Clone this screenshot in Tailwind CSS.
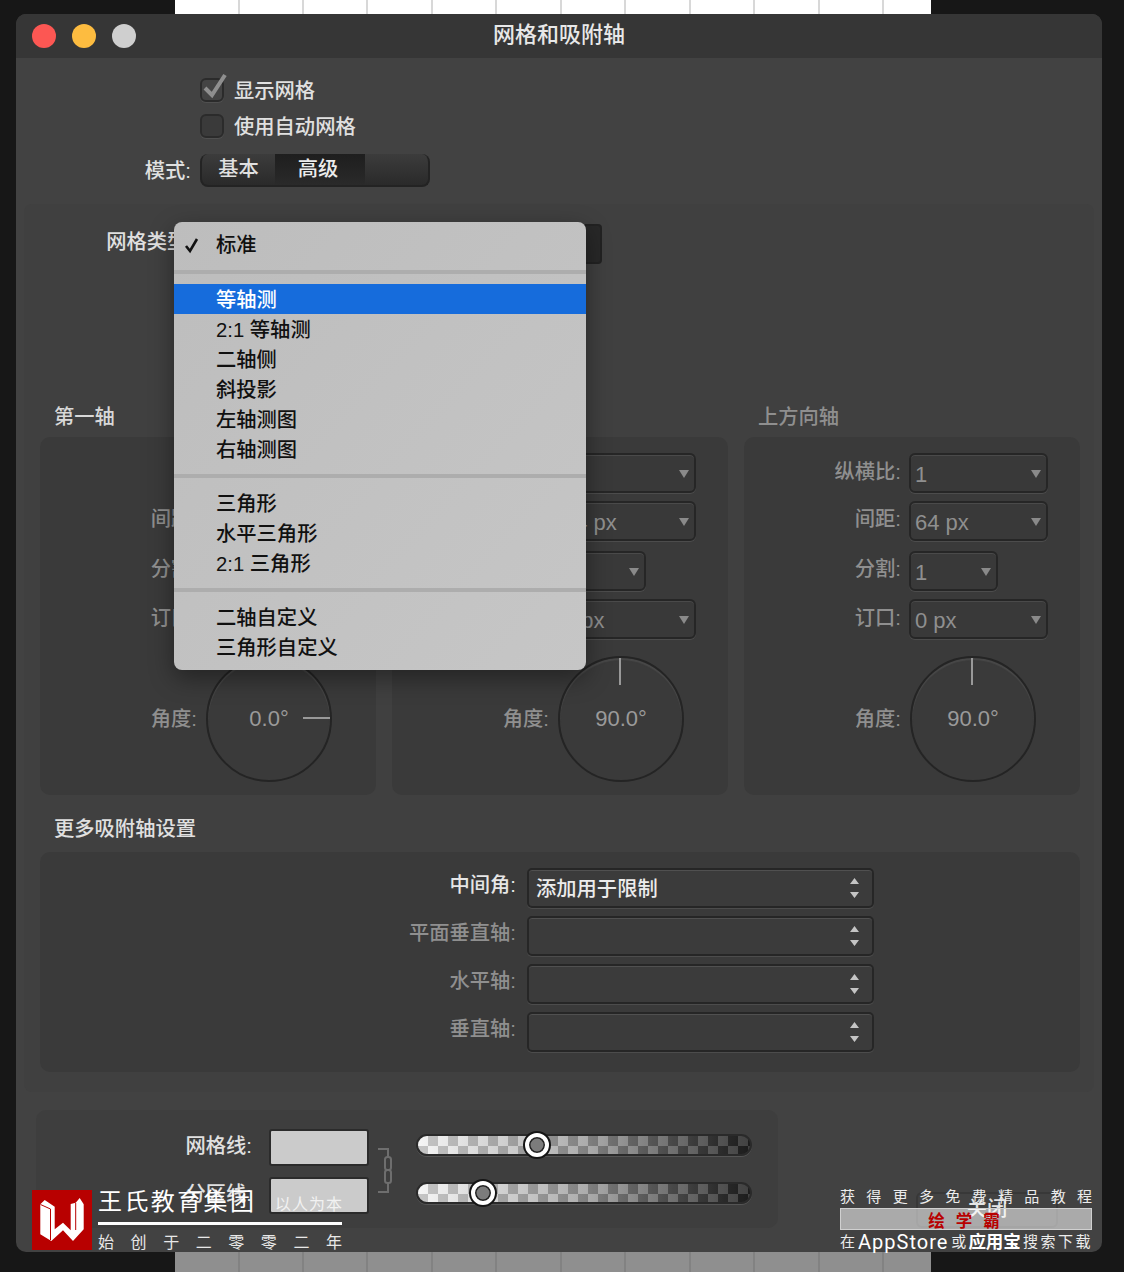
<!DOCTYPE html>
<html lang="zh-CN">
<head>
    <meta charset="UTF-8">
    <title>网格和吸附轴</title>
    <script src="https://cdn.jsdelivr.net/npm/@tailwindcss/browser@4"></script>
</head>
<body class="bg-[#171717]">
<div class="relative w-[1124px] h-[1272px] overflow-hidden font-['Liberation_Sans','Noto_Sans_CJK_SC',sans-serif] font-medium text-[20.3px] leading-[28px] text-[#e6e6e6]">
    <!-- document behind the dialog -->
    <div class="absolute left-[175px] top-0 w-[756px] h-[14px] bg-white bg-[repeating-linear-gradient(90deg,#ffffff_0,#ffffff_62.5px,#d8d8d8_62.5px,#d8d8d8_64.5px)]"></div>
    <div class="absolute left-[175px] top-[1252px] w-[756px] h-[20px] bg-[#8f8f8f] bg-[repeating-linear-gradient(90deg,#8f8f8f_0,#8f8f8f_62.5px,#828282_62.5px,#828282_64.5px)]"></div>

    <!-- dialog window -->
    <div class="absolute left-[16px] top-[14px] w-[1086px] h-[1238px] bg-[#424242] rounded-[10px] overflow-hidden">
        <div class="relative h-[44px] bg-[#363636] flex items-center justify-center text-[22px] text-[#e8e8e8] pb-[3px]">
            <div class="absolute left-[16px] top-[10px] flex gap-[16px]">
                <span class="w-[24px] h-[24px] rounded-full bg-[#fc5753]"></span>
                <span class="w-[24px] h-[24px] rounded-full bg-[#fdbc40]"></span>
                <span class="w-[24px] h-[24px] rounded-full bg-[#cfcfcf]"></span>
            </div>
            网格和吸附轴
        </div>

        <!-- show grid -->
        <div class="mt-[20px] ml-[184px] flex items-center h-[24px]">
            <span class="relative w-[24px] h-[24px] rounded-[6px] bg-[#444444] border-2 border-[#2b2b2b] shadow-[0_1px_0_#505050]">
                <svg class="absolute left-[1px] top-[-8px]" width="26" height="28" viewBox="0 0 26 28"><path d="M2 16 L9 23 L22 3" fill="none" stroke="#8f8f8f" stroke-width="4"/></svg>
            </span>
            <span class="ml-[10px] pt-[2px] text-[#e0e0e0]">显示网格</span>
        </div>
        <div class="mt-[12px] ml-[184px] flex items-center h-[24px]">
            <span class="w-[24px] h-[24px] rounded-[6px] bg-[#3a3a3a] border-2 border-[#2b2b2b] shadow-[0_1px_0_#505050]"></span>
            <span class="ml-[10px] pt-[2px] text-[#e0e0e0]">使用自动网格</span>
        </div>
        <div class="mt-[16px] flex items-center h-[33px]">
            <span class="w-[175px] text-right text-[#e0e0e0]">模式:</span>
            <div class="ml-[9px] w-[230px] h-[33px] flex rounded-[8px] border-2 border-[#232323] border-t-0 bg-gradient-to-b from-[#3c3c3c] to-[#2a2a2a] overflow-hidden">
                <span class="w-[73px] text-center text-[#e0e0e0] leading-[30px]">基本</span>
                <span class="w-[90px] pr-[4px] text-center text-[#ececec] leading-[30px] bg-gradient-to-b from-[#1e1e1e] to-[#2a2a2a]">高级</span>
            </div>
        </div>

        <!-- grid settings panel -->
        <div class="mt-[17px] mx-[8px] h-[888px] bg-[#404040] rounded-[8px] pt-[20px] pl-[16px]">
            <div class="flex items-center h-[40px]">
                <span class="w-[169px] text-right text-[#e0e0e0] -ml-[16px] pb-[4px]">网格类型:</span>
                <span class="ml-[8px] w-[401px] h-[40px] rounded-[4px] bg-[#282828] border-2 border-[#222]"></span>
            </div>

            <div class="mt-[141px] grid grid-cols-[336px_336px_336px] gap-x-[16px]">
                <div class="pl-[14px] h-[24px] leading-[24px] text-[#d8d8d8]">第一轴</div>
                <div class="pl-[14px] h-[24px] leading-[24px] text-[#8f8f8f]">第二轴</div>
                <div class="pl-[14px] h-[24px] leading-[24px] text-[#8f8f8f]">上方向轴</div>
            </div>

            <div class="mt-[8px] grid grid-cols-[336px_336px_336px] gap-x-[16px] text-[#8f8f8f]">
                <!-- first axis -->
                <div class="h-[358px] bg-[#3a3a3a] rounded-[10px] pt-[16px]">
                    <div class="flex items-center h-[40px]">
                        <span class="w-[157px]"></span>
                        <div class="relative ml-[8px] w-[139px] h-[40px] rounded-[6px] border-2 border-[#262626] bg-[#393939] shadow-[inset_0_1px_0_#4a4a4a,0_1px_0_#4c4c4c] pl-[4px] text-[22px] leading-[40px]">1<svg class="absolute right-[5px] top-[15px]" width="10" height="8" viewBox="0 0 10 8"><path d="M0 0H10L5 8Z" fill="#8a8a8a"/></svg></div>
                    </div>
                    <div class="flex items-center h-[40px] mt-[8px]">
                        <span class="w-[157px] text-right pb-[4px]">间距:</span>
                        <div class="relative ml-[8px] w-[139px] h-[40px] rounded-[6px] border-2 border-[#262626] bg-[#393939] shadow-[inset_0_1px_0_#4a4a4a,0_1px_0_#4c4c4c] pl-[4px] text-[22px] leading-[40px]">64 px<svg class="absolute right-[5px] top-[15px]" width="10" height="8" viewBox="0 0 10 8"><path d="M0 0H10L5 8Z" fill="#8a8a8a"/></svg></div>
                    </div>
                    <div class="flex items-center h-[40px] mt-[10px]">
                        <span class="w-[157px] text-right pb-[4px]">分割:</span>
                        <div class="relative ml-[8px] w-[89px] h-[40px] rounded-[6px] border-2 border-[#262626] bg-[#393939] shadow-[inset_0_1px_0_#4a4a4a,0_1px_0_#4c4c4c] pl-[4px] text-[22px] leading-[40px]">1<svg class="absolute right-[5px] top-[15px]" width="10" height="8" viewBox="0 0 10 8"><path d="M0 0H10L5 8Z" fill="#8a8a8a"/></svg></div>
                    </div>
                    <div class="flex items-center h-[40px] mt-[8px]">
                        <span class="w-[157px] text-right pb-[3px]">订口:</span>
                        <div class="relative ml-[8px] w-[139px] h-[40px] rounded-[6px] border-2 border-[#262626] bg-[#393939] shadow-[inset_0_1px_0_#4a4a4a,0_1px_0_#4c4c4c] pl-[4px] text-[22px] leading-[40px]">0 px<svg class="absolute right-[5px] top-[15px]" width="10" height="8" viewBox="0 0 10 8"><path d="M0 0H10L5 8Z" fill="#8a8a8a"/></svg></div>
                    </div>
                    <div class="flex items-center h-[126px] mt-[17px]">
                        <span class="w-[157px] text-right">角度:</span>
                        <div class="relative ml-[9px] w-[126px] h-[126px] rounded-full border-2 border-[#242424] shadow-[inset_0_2px_1px_#484848] flex items-center justify-center text-[22px] text-[#9a9a9a]">0.0°<span class="absolute right-0 top-[59px] w-[27px] h-[2px] bg-[#999]"></span></div>
                    </div>
                </div>
                <!-- second axis -->
                <div class="h-[358px] bg-[#3a3a3a] rounded-[10px] pt-[16px]">
                    <div class="flex items-center h-[40px]">
                        <span class="w-[157px] text-right pb-[2px]">纵横比:</span>
                        <div class="relative ml-[8px] w-[139px] h-[40px] rounded-[6px] border-2 border-[#262626] bg-[#393939] shadow-[inset_0_1px_0_#4a4a4a,0_1px_0_#4c4c4c] pl-[4px] text-[22px] leading-[40px]">1<svg class="absolute right-[5px] top-[15px]" width="10" height="8" viewBox="0 0 10 8"><path d="M0 0H10L5 8Z" fill="#8a8a8a"/></svg></div>
                    </div>
                    <div class="flex items-center h-[40px] mt-[8px]">
                        <span class="w-[157px] text-right pb-[4px]">间距:</span>
                        <div class="relative ml-[8px] w-[139px] h-[40px] rounded-[6px] border-2 border-[#262626] bg-[#393939] shadow-[inset_0_1px_0_#4a4a4a,0_1px_0_#4c4c4c] pl-[4px] text-[22px] leading-[40px]">64 px<svg class="absolute right-[5px] top-[15px]" width="10" height="8" viewBox="0 0 10 8"><path d="M0 0H10L5 8Z" fill="#8a8a8a"/></svg></div>
                    </div>
                    <div class="flex items-center h-[40px] mt-[10px]">
                        <span class="w-[157px] text-right pb-[4px]">分割:</span>
                        <div class="relative ml-[8px] w-[89px] h-[40px] rounded-[6px] border-2 border-[#262626] bg-[#393939] shadow-[inset_0_1px_0_#4a4a4a,0_1px_0_#4c4c4c] pl-[4px] text-[22px] leading-[40px]">1<svg class="absolute right-[5px] top-[15px]" width="10" height="8" viewBox="0 0 10 8"><path d="M0 0H10L5 8Z" fill="#8a8a8a"/></svg></div>
                    </div>
                    <div class="flex items-center h-[40px] mt-[8px]">
                        <span class="w-[157px] text-right pb-[3px]">订口:</span>
                        <div class="relative ml-[8px] w-[139px] h-[40px] rounded-[6px] border-2 border-[#262626] bg-[#393939] shadow-[inset_0_1px_0_#4a4a4a,0_1px_0_#4c4c4c] pl-[4px] text-[22px] leading-[40px]">0 px<svg class="absolute right-[5px] top-[15px]" width="10" height="8" viewBox="0 0 10 8"><path d="M0 0H10L5 8Z" fill="#8a8a8a"/></svg></div>
                    </div>
                    <div class="flex items-center h-[126px] mt-[17px]">
                        <span class="w-[157px] text-right">角度:</span>
                        <div class="relative ml-[9px] w-[126px] h-[126px] rounded-full border-2 border-[#242424] shadow-[inset_0_2px_1px_#484848] flex items-center justify-center text-[22px] text-[#9a9a9a]">90.0°<span class="absolute left-[59px] top-0 w-[2px] h-[27px] bg-[#999]"></span></div>
                    </div>
                </div>
                <!-- up axis -->
                <div class="h-[358px] bg-[#3a3a3a] rounded-[10px] pt-[16px]">
                    <div class="flex items-center h-[40px]">
                        <span class="w-[157px] text-right pb-[2px]">纵横比:</span>
                        <div class="relative ml-[8px] w-[139px] h-[40px] rounded-[6px] border-2 border-[#262626] bg-[#393939] shadow-[inset_0_1px_0_#4a4a4a,0_1px_0_#4c4c4c] pl-[4px] text-[22px] leading-[40px]">1<svg class="absolute right-[5px] top-[15px]" width="10" height="8" viewBox="0 0 10 8"><path d="M0 0H10L5 8Z" fill="#8a8a8a"/></svg></div>
                    </div>
                    <div class="flex items-center h-[40px] mt-[8px]">
                        <span class="w-[157px] text-right pb-[4px]">间距:</span>
                        <div class="relative ml-[8px] w-[139px] h-[40px] rounded-[6px] border-2 border-[#262626] bg-[#393939] shadow-[inset_0_1px_0_#4a4a4a,0_1px_0_#4c4c4c] pl-[4px] text-[22px] leading-[40px]">64 px<svg class="absolute right-[5px] top-[15px]" width="10" height="8" viewBox="0 0 10 8"><path d="M0 0H10L5 8Z" fill="#8a8a8a"/></svg></div>
                    </div>
                    <div class="flex items-center h-[40px] mt-[10px]">
                        <span class="w-[157px] text-right pb-[4px]">分割:</span>
                        <div class="relative ml-[8px] w-[89px] h-[40px] rounded-[6px] border-2 border-[#262626] bg-[#393939] shadow-[inset_0_1px_0_#4a4a4a,0_1px_0_#4c4c4c] pl-[4px] text-[22px] leading-[40px]">1<svg class="absolute right-[5px] top-[15px]" width="10" height="8" viewBox="0 0 10 8"><path d="M0 0H10L5 8Z" fill="#8a8a8a"/></svg></div>
                    </div>
                    <div class="flex items-center h-[40px] mt-[8px]">
                        <span class="w-[157px] text-right pb-[3px]">订口:</span>
                        <div class="relative ml-[8px] w-[139px] h-[40px] rounded-[6px] border-2 border-[#262626] bg-[#393939] shadow-[inset_0_1px_0_#4a4a4a,0_1px_0_#4c4c4c] pl-[4px] text-[22px] leading-[40px]">0 px<svg class="absolute right-[5px] top-[15px]" width="10" height="8" viewBox="0 0 10 8"><path d="M0 0H10L5 8Z" fill="#8a8a8a"/></svg></div>
                    </div>
                    <div class="flex items-center h-[126px] mt-[17px]">
                        <span class="w-[157px] text-right">角度:</span>
                        <div class="relative ml-[9px] w-[126px] h-[126px] rounded-full border-2 border-[#242424] shadow-[inset_0_2px_1px_#484848] flex items-center justify-center text-[22px] text-[#9a9a9a]">90.0°<span class="absolute left-[59px] top-0 w-[2px] h-[27px] bg-[#999]"></span></div>
                    </div>
                </div>
            </div>

            <!-- more snap settings -->
            <div class="mt-[22px] pl-[14px] h-[24px] leading-[24px] text-[#e0e0e0]">更多吸附轴设置</div>
            <div class="mt-[11px] w-[1040px] h-[220px] bg-[#3a3a3a] rounded-[10px] pt-[16px] flex flex-col gap-[8px] text-[#8f8f8f]">
                <div class="flex items-center h-[40px]">
                    <span class="w-[476px] text-right text-[#e6e6e6] pb-[6px]">中间角:</span>
                    <div class="relative ml-[11px] w-[347px] h-[40px] rounded-[5px] border-2 border-[#262626] bg-[#3b3b3b] shadow-[inset_0_1px_0_#505050,0_1px_0_#4c4c4c] pl-[7px] leading-[38px] text-[#ececec]">添加用于限制<svg class="absolute right-[13px] top-[8px]" width="9" height="20" viewBox="0 0 9 20"><path d="M4.5 0L9 6H0ZM0 14H9L4.5 20Z" fill="#c4c4c4"/></svg></div>
                </div>
                <div class="flex items-center h-[40px]">
                    <span class="w-[476px] text-right pb-[6px]">平面垂直轴:</span>
                    <div class="relative ml-[11px] w-[347px] h-[40px] rounded-[5px] border-2 border-[#262626] bg-[#3b3b3b] shadow-[inset_0_1px_0_#505050,0_1px_0_#4c4c4c]"><svg class="absolute right-[13px] top-[8px]" width="9" height="20" viewBox="0 0 9 20"><path d="M4.5 0L9 6H0ZM0 14H9L4.5 20Z" fill="#c4c4c4"/></svg></div>
                </div>
                <div class="flex items-center h-[40px]">
                    <span class="w-[476px] text-right pb-[6px]">水平轴:</span>
                    <div class="relative ml-[11px] w-[347px] h-[40px] rounded-[5px] border-2 border-[#262626] bg-[#3b3b3b] shadow-[inset_0_1px_0_#505050,0_1px_0_#4c4c4c]"><svg class="absolute right-[13px] top-[8px]" width="9" height="20" viewBox="0 0 9 20"><path d="M4.5 0L9 6H0ZM0 14H9L4.5 20Z" fill="#c4c4c4"/></svg></div>
                </div>
                <div class="flex items-center h-[40px]">
                    <span class="w-[476px] text-right pb-[6px]">垂直轴:</span>
                    <div class="relative ml-[11px] w-[347px] h-[40px] rounded-[5px] border-2 border-[#262626] bg-[#3b3b3b] shadow-[inset_0_1px_0_#505050,0_1px_0_#4c4c4c]"><svg class="absolute right-[13px] top-[8px]" width="9" height="20" viewBox="0 0 9 20"><path d="M4.5 0L9 6H0ZM0 14H9L4.5 20Z" fill="#c4c4c4"/></svg></div>
                </div>
            </div>
        </div>

        <!-- colour row and close button -->
        <div class="mt-[18px] ml-[20px] flex items-start">
            <div class="relative w-[742px] h-[118px] bg-[#3e3e3e] rounded-[10px] pt-[19px] flex flex-col gap-[11px]">
                <div class="flex items-center h-[37px]">
                    <span class="w-[216px] text-right text-[#e0e0e0] pb-[4px]">网格线:</span>
                    <span class="ml-[17px] w-[100px] h-[37px] rounded-[3px] bg-[#cbcbcb] border-2 border-[#2b2b2b]"></span>
                    <div class="relative ml-[47px] mb-[5px] w-[336px] h-[22px] rounded-full border-2 border-[#2a2a2a] shadow-[0_1px_0_#555] bg-gradient-to-r from-[#f4f4f4] via-[#a0a0a0] to-[#222222]">
                        <div class="absolute inset-0 rounded-full bg-[conic-gradient(#00000030_25%,#ffffff24_0_50%,#00000030_0_75%,#ffffff24_0)] bg-[length:20px_20px]"></div>
                        <span class="absolute left-[107px] top-[-3px] w-[24px] h-[24px] rounded-full bg-[#7c7c7c] border-[4px] border-white shadow-[0_0_0_2px_#151515,inset_0_0_0_1.5px_#222222]"></span>
                    </div>
                </div>
                <div class="flex items-center h-[37px]">
                    <span class="w-[216px] text-right text-[#e0e0e0] pb-[4px]">分区线:</span>
                    <span class="ml-[17px] w-[100px] h-[37px] rounded-[3px] bg-[#cbcbcb] border-2 border-[#2b2b2b]"></span>
                    <div class="relative ml-[47px] mb-[5px] w-[336px] h-[22px] rounded-full border-2 border-[#2a2a2a] shadow-[0_1px_0_#555] bg-gradient-to-r from-[#f4f4f4] via-[#a0a0a0] to-[#222222]">
                        <div class="absolute inset-0 rounded-full bg-[conic-gradient(#00000030_25%,#ffffff24_0_50%,#00000030_0_75%,#ffffff24_0)] bg-[length:20px_20px]"></div>
                        <span class="absolute left-[53px] top-[-3px] w-[24px] h-[24px] rounded-full bg-[#7c7c7c] border-[4px] border-white shadow-[0_0_0_2px_#151515,inset_0_0_0_1.5px_#222222]"></span>
                    </div>
                </div>
                <!-- chain link -->
                <svg class="absolute left-[342px] top-[38px]" width="16" height="46" viewBox="0 0 16 46" fill="none" stroke="#6e6e6e" stroke-width="2">
                    <path d="M0 1H10V9M10 35V44H0"/>
                    <rect x="7" y="9" width="6" height="13" rx="2.5"/>
                    <rect x="7" y="22" width="6" height="13" rx="2.5"/>
                </svg>
            </div>
            <div class="ml-[138px] mt-[82px] w-[142px] h-[36px] rounded-[6px] border-2 border-[#383838] flex items-center justify-center text-[#e4e4e4] pb-[2px]">关闭</div>
        </div>
    </div>

    <!-- popup menu over the dialog -->
    <div class="absolute left-[174px] top-[222px] w-[412px] h-[448px] rounded-[8px] bg-[#c0c0c0] bg-gradient-to-br from-[#bdbdbd] to-[#c6c6c6] py-[8px] text-[#111] shadow-[0_8px_24px_#00000066]">
        <div class="relative h-[30px] pl-[42px] leading-[30px]">
            <svg class="absolute left-[10px] top-[7px]" width="16" height="17" viewBox="0 0 16 17"><path d="M2 9 L6 14 L13 2" fill="none" stroke="#111" stroke-width="2.6"/></svg>
            标准
        </div>
        <div class="h-[4px] my-[10px] bg-[#adadad]"></div>
        <div class="h-[30px] pl-[42px] leading-[32px] bg-[#166cdc] text-white">等轴测</div>
        <div class="h-[30px] pl-[42px] leading-[32px]">2:1 等轴测</div>
        <div class="h-[30px] pl-[42px] leading-[32px]">二轴侧</div>
        <div class="h-[30px] pl-[42px] leading-[32px]">斜投影</div>
        <div class="h-[30px] pl-[42px] leading-[32px]">左轴测图</div>
        <div class="h-[30px] pl-[42px] leading-[32px]">右轴测图</div>
        <div class="h-[4px] my-[10px] bg-[#adadad]"></div>
        <div class="h-[30px] pl-[42px] leading-[32px]">三角形</div>
        <div class="h-[30px] pl-[42px] leading-[32px]">水平三角形</div>
        <div class="h-[30px] pl-[42px] leading-[32px]">2:1 三角形</div>
        <div class="h-[4px] my-[10px] bg-[#adadad]"></div>
        <div class="h-[30px] pl-[42px] leading-[32px]">二轴自定义</div>
        <div class="h-[30px] pl-[42px] leading-[32px]">三角形自定义</div>
    </div>

    <!-- watermark left -->
    <div class="absolute left-[32px] top-[1190px] flex font-normal text-white">
        <svg width="60" height="60" viewBox="0 0 60 60">
            <rect width="60" height="60" fill="#b80000"/>
            <path d="M8.3 14.3L12.7 10L22.7 16.7V39.3L31 32.7L38.7 40.3V14L43.7 12.7L47.7 8L51.7 14.3V39.3L41 51L31 40.3L19.3 51L8.3 44.3Z" fill="#fff"/>
            <path d="M8.5 14.5L18.5 19V50M43.7 13V40" fill="none" stroke="#b80000" stroke-width="1"/>
        </svg>
        <div class="ml-[6px] w-[244px]">
            <div class="h-[32px] leading-[24px] text-[24px] tracking-[2.4px] whitespace-nowrap">王氏教育集团</div>
            <div class="h-[3px] bg-white"></div>
            <div class="mt-[9px] flex justify-between text-[16px] leading-[18px] text-[#e8e8e8]"><span>始</span><span>创</span><span>于</span><span>二</span><span>零</span><span>零</span><span>二</span><span>年</span></div>
        </div>
    </div>
    <div class="absolute left-[275px] top-[1196px] font-normal text-[16px] leading-[18px] tracking-[1px] text-[#f2f2f2]">以人为本</div>

    <!-- watermark right -->
    <div class="absolute left-[840px] top-[1188px] w-[252px] font-normal text-white">
        <div class="flex justify-between text-[15px] leading-[18px] text-[#ececec]"><span>获</span><span>得</span><span>更</span><span>多</span><span>免</span><span>费</span><span>精</span><span>品</span><span>教</span><span>程</span></div>
        <div class="mt-[2px] h-[22px] bg-white/55 border border-[#d0d0d0] flex items-center justify-center gap-[11px] pt-[3px] text-[16.5px] font-bold text-[#b80000] pr-[4px]"><span>绘</span><span>学</span><span>霸</span></div>
        <div class="flex items-center h-[24px] text-[15px] text-[#ececec] whitespace-nowrap"><span>在</span><span class="ml-[3px] font-['Roboto',sans-serif] text-[20px] tracking-[1px] text-white">AppStore</span><span class="ml-[3px]">或</span><span class="ml-[2px] text-[17.5px] font-bold text-white">应用宝</span><span class="ml-[2px] tracking-[2.5px]">搜索下载</span></div>
    </div>
</div>
</body>
</html>
